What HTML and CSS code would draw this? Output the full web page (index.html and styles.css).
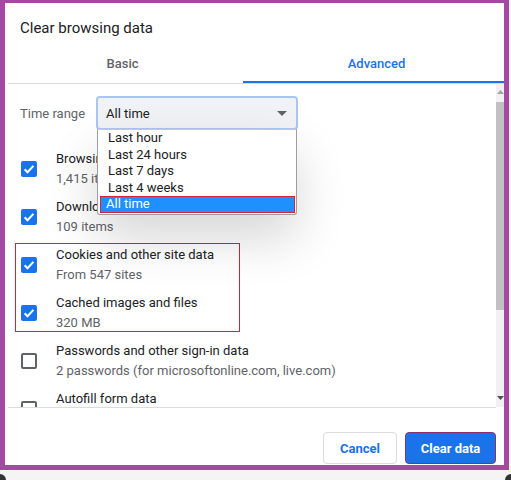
FILE: index.html
```html
<!DOCTYPE html>
<html>
<head>
<meta charset="utf-8">
<link rel="stylesheet" href="styles.css">
</head>
<body>
<div class="frame">
  <div class="title">Clear browsing data</div>
  <div class="tabs">
    <div class="tab tab-basic">Basic</div>
    <div class="tab tab-active">Advanced</div>
  </div>
  <div class="content">
    <div class="main">
      <div class="range-row">
        <div class="range-label">Time range</div>
        <div class="select">
          <span>All time</span>
          <svg class="arrow" width="10" height="5" viewBox="0 0 10 5"><path d="M0 0h10L5 5z" fill="#5f6368"/></svg>
        </div>
      </div>
      <div class="row">
        <span class="cb on"><svg width="16" height="16" viewBox="0 0 16 16"><path d="M3.6 8.3l2.9 2.9 5.9-6.3" fill="none" stroke="#fff" stroke-width="2"/></svg></span>
        <div class="texts"><div class="l1">Browsing history</div><div class="l2">1,415 items</div></div>
      </div>
      <div class="row">
        <span class="cb on"><svg width="16" height="16" viewBox="0 0 16 16"><path d="M3.6 8.3l2.9 2.9 5.9-6.3" fill="none" stroke="#fff" stroke-width="2"/></svg></span>
        <div class="texts"><div class="l1">Download history</div><div class="l2">109 items</div></div>
      </div>
      <div class="row">
        <span class="cb on"><svg width="16" height="16" viewBox="0 0 16 16"><path d="M3.6 8.3l2.9 2.9 5.9-6.3" fill="none" stroke="#fff" stroke-width="2"/></svg></span>
        <div class="texts"><div class="l1">Cookies and other site data</div><div class="l2">From 547 sites</div></div>
      </div>
      <div class="row">
        <span class="cb on"><svg width="16" height="16" viewBox="0 0 16 16"><path d="M3.6 8.3l2.9 2.9 5.9-6.3" fill="none" stroke="#fff" stroke-width="2"/></svg></span>
        <div class="texts"><div class="l1">Cached images and files</div><div class="l2">320 MB</div></div>
      </div>
      <div class="row">
        <span class="cb off"></span>
        <div class="texts"><div class="l1">Passwords and other sign-in data</div><div class="l2">2 passwords (for microsoftonline.com, live.com)</div></div>
      </div>
      <div class="row">
        <span class="cb off"></span>
        <div class="texts"><div class="l1">Autofill form data</div><div class="l2">&nbsp;</div></div>
      </div>

      <div class="highlight-box"></div>
      <ul class="dropdown">
        <li>Last hour</li>
        <li>Last 24 hours</li>
        <li>Last 7 days</li>
        <li>Last 4 weeks</li>
        <li class="selected">All time</li>
      </ul>
    </div>
    <div class="scrollbar">
      <svg class="sb-up" width="7" height="4" viewBox="0 0 7 4"><path d="M0 4L3.5 0 7 4z" fill="#a3a3a3"/></svg>
      <div class="thumb"></div>
      <div class="sb-fill"></div>
      <svg class="sb-down" width="7" height="4" viewBox="0 0 7 4"><path d="M0 0h7L3.5 4z" fill="#505050"/></svg>
    </div>
  </div>
  <div class="footer">
    <button class="btn btn-cancel">Cancel</button>
    <button class="btn btn-clear">Clear data</button>
  </div>
</div>
<div class="below">
  <span class="corner corner-l"></span>
  <span class="corner corner-r"></span>
</div>
</body>
</html>
```

FILE: styles.css
```css
* { box-sizing: border-box; }
html, body { margin: 0; padding: 0; }
body {
  width: 511px;
  height: 480px;
  overflow: hidden;
  background: #f4f4f4;
  font-family: Roboto, "Liberation Sans", sans-serif;
  font-size: 13px;
  color: #202124;
}
.frame {
  width: 509px;
  height: 470px;
  border-left: 5px solid #a349a4;
  border-top: 3px solid #a349a4;
  border-right: 5px solid #a349a4;
  border-bottom: 5px solid #a349a4;
  background: #fff;
  display: flex;
  flex-direction: column;
}
.title {
  padding: 15px 0 0 15px;
  font-size: 15px;
  line-height: 20px;
  height: 35px;
  color: #202124;
}
.tabs {
  display: flex;
  margin-left: 3px;
  border-bottom: 1px solid #dadce0;
}
.tab {
  padding-top: 18px;
  padding-bottom: 9px;
  line-height: 16px;
  text-align: center;
  font-weight: 500;
  border-bottom: 2px solid transparent;
}
.tab-basic {
  width: 235px;
  color: #5f6368;
  padding-right: 6px;
}
.tab-active {
  flex: 1;
  color: #1a73e8;
  border-bottom-color: #1a73e8;
  padding-left: 6px;
}
.content {
  display: flex;
  height: 323px;
  overflow: hidden;
}
.main {
  position: relative;
  flex: 1;
  overflow: hidden;
}
.range-row {
  display: flex;
  align-items: center;
  padding: 12px 0 15px 15px;
}
.range-label {
  width: 76px;
  color: #5f6368;
}
.select {
  width: 202px;
  height: 34px;
  border: 2px solid #a9c6f2;
  border-radius: 4px;
  background: #f0f2f5;
  display: flex;
  align-items: center;
  justify-content: space-between;
  padding: 0 9px 0 8px;
  color: #202124;
}
.row {
  display: flex;
  align-items: center;
  height: 48px;
  padding-left: 16px;
}
.cb {
  width: 16px;
  height: 16px;
  flex: none;
  border-radius: 2px;
  margin-right: 19px;
  display: flex;
}
.cb.on { background: #1a73e8; }
.cb.off { border: 2px solid #5f6368; }
.texts { line-height: 20px; }
.l1 { color: #202124; }
.l2 { color: #5f6368; }
.highlight-box {
  position: absolute;
  left: 10px;
  top: 159px;
  width: 225px;
  height: 89px;
  border: 1px solid #d4233b;
}
.dropdown {
  position: absolute;
  left: 92px;
  top: 45px;
  width: 200px;
  margin: 0;
  padding: 0;
  list-style: none;
  background: #fff;
  border: 1px solid #9e9e9e;
  border-top-color: #c8c8c8;
  border-radius: 0 0 3px 3px;
  box-shadow: 0 24px 50px rgba(0, 0, 0, 0.16);
}
.dropdown li {
  height: 16.5px;
  line-height: 16.5px;
  padding-left: 8px;
  margin: 0 1px 0 2px;
  color: #202124;
}
.dropdown li.selected {
  background: #1e90ff;
  color: #fff;
  border: 1px solid #d4233b;
  padding-left: 5px;
  line-height: 14.5px;
  margin-bottom: 1px;
}
.scrollbar {
  width: 8px;
  flex: none;
  background: #f1f1f1;
  display: flex;
  flex-direction: column;
  align-items: center;
  padding: 6px 0 7px;
}
.sb-up { flex: none; }
.thumb {
  width: 8px;
  height: 208px;
  margin-top: 8px;
  background: #c1c1c1;
  flex: none;
}
.sb-fill { flex: 1; }
.sb-down { flex: none; }
.footer {
  flex: 1;
  border-top: 1px solid #dadce0;
  margin-left: 3px;
  margin-right: 8px;
  display: flex;
  justify-content: flex-end;
  align-items: flex-start;
  padding-top: 24px;
  gap: 8px;
}
.btn {
  height: 32px;
  border-radius: 4px;
  font-family: Roboto, "Liberation Sans", sans-serif;
  font-size: 13px;
  font-weight: 700;
  padding: 0;
}
.btn-cancel {
  width: 74px;
  background: #fff;
  border: 1px solid #dadce0;
  color: #1a73e8;
}
.btn-clear {
  width: 91px;
  background: #1a73e8;
  border: 1px solid #8e2f6e;
  color: #fff;
}
.below {
  height: 10px;
  display: flex;
  justify-content: space-between;
  align-items: flex-end;
}
.corner {
  width: 6px;
  height: 6px;
  background: #333;
}
.corner-l { border-radius: 0 6px 0 0; }
.corner-r { border-radius: 6px 0 0 0; }
```
